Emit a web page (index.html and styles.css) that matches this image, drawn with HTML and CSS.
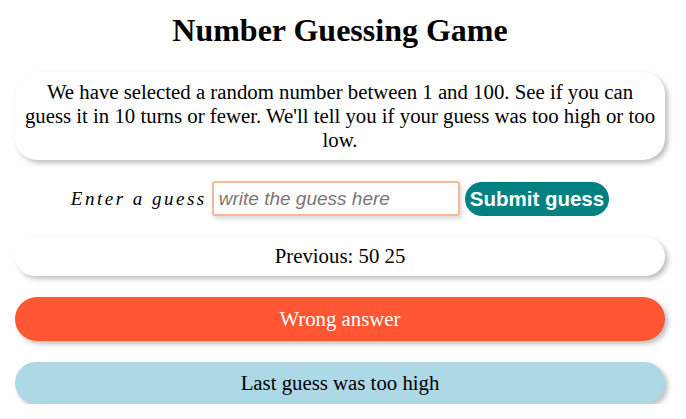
FILE: index.html
```html
<!DOCTYPE html>
<html lang="en">
<head>
<meta charset="utf-8">
<title>Number Guessing Game</title>
<link rel="stylesheet" href="styles.css">
</head>
<body>
<main class="game">
  <h1 class="title">Number Guessing Game</h1>
  <p class="card intro">We have selected a random number between 1 and 100. See if you can guess it in 10 turns or fewer. We'll tell you if your guess was too high or too low.</p>
  <div class="form-row">
    <label class="guess-label" for="guessField">Enter a guess</label>
    <input class="guess-field" id="guessField" type="text" placeholder="write the guess here">
    <button class="guess-submit" type="button">Submit guess</button>
  </div>
  <p class="card guesses">Previous: 50 25</p>
  <p class="card last-result">Wrong answer</p>
  <p class="card low-or-hi">Last guess was too high</p>
</main>
</body>
</html>
```

FILE: styles.css
```css
html, body {
  margin: 0;
  padding: 0;
  background: #ffffff;
}

body {
  font-family: "Liberation Serif", "Times New Roman", serif;
  color: #000;
}

.game {
  display: flex;
  flex-direction: column;
  gap: 21px;
  padding: 0 21px 0 15px;
}

.title {
  font-size: 32px;
  font-weight: bold;
  text-align: center;
  margin: 12px 0 2px;
  line-height: 37px;
}

.card {
  margin: 0;
  font-size: 20.8px;
  line-height: 24px;
  text-align: center;
  border-radius: 22px;
  box-shadow: 3px 3px 5px rgba(0, 0, 0, 0.25);
  background: #ffffff;
}

.intro {
  padding: 8px 7px;
}

.form-row {
  display: flex;
  justify-content: center;
  align-items: center;
  gap: 5px;
  height: 35px;
  margin-left: 0;
}

.guess-label {
  font-style: italic;
  font-size: 19px;
  letter-spacing: 2.5px;
}

.guess-field {
  box-sizing: border-box;
  width: 248px;
  height: 35px;
  border: 2px solid #f7b896;
  border-radius: 3px;
  padding: 0 5px;
  font-family: "Liberation Sans", Arial, sans-serif;
  font-size: 19px;
  font-style: italic;
  box-shadow: 2px 3px 5px rgba(0, 0, 0, 0.15);
  outline: none;
}

.guess-field::placeholder {
  color: #777;
  font-style: italic;
}

.guess-submit {
  box-sizing: border-box;
  height: 34px;
  padding: 0 5px;
  border: none;
  border-radius: 17px;
  background: #008080;
  color: #ffffff;
  font-family: "Liberation Sans", Arial, sans-serif;
  font-weight: bold;
  font-size: 20.5px;
}

.guesses {
  padding: 7px 0 8px;
}

.last-result {
  background: #ff5733;
  color: #ffffff;
  padding: 10px 0;
}

.low-or-hi {
  background: #add8e6;
  color: #000;
  padding: 9px 0;
}
```
